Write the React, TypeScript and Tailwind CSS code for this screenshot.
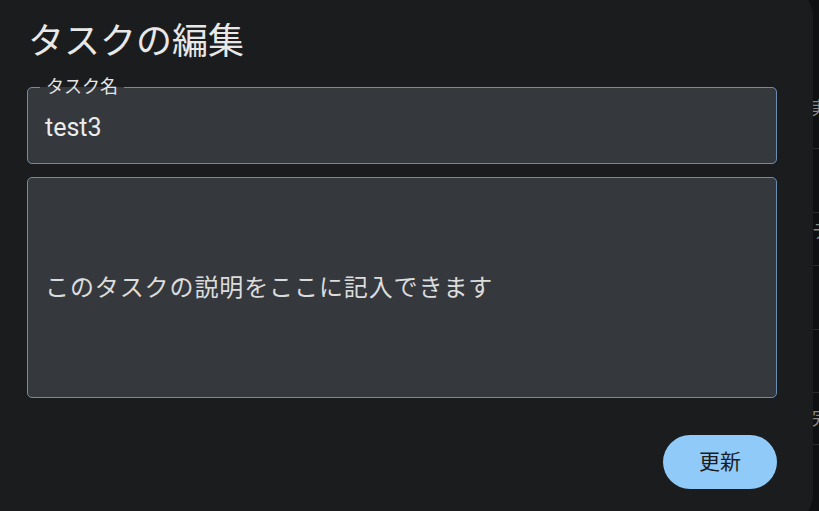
import React from "react";

const font = { fontFamily: 'Roboto, "Noto Sans CJK JP", sans-serif' };

export default function App() {
  return (
    <div
      className="w-[819px] h-[511px] overflow-hidden flex bg-[#0f1011] text-[#e4e4e4]"
      style={font}
    >
      <div className="w-[813px] shrink-0 -mt-[12px] h-[535px] rounded-r-[28px] bg-[#1b1c1e] pt-[12px] pl-[27px] pr-[36px] flex flex-col">
        <h2 className="mt-[21px] ml-[1px] text-[36px] leading-[42px] font-normal text-[#e8e8e8]">
          タスクの編集
        </h2>
        <fieldset className="mt-[15px] h-[86px] border border-[#6b8cad] rounded-[5px] bg-[#35393e] px-[17px] min-w-0">
          <legend className="-ml-[5px] px-[6px] text-[18px] leading-[18px] text-[#e4e4e4]">
            タスク名
          </legend>
          <div className="mt-[17px] text-[25px] leading-[30px] text-[#ececec]">test3</div>
        </fieldset>
        <div className="mt-[13px] h-[221px] border border-[#6b8cad] rounded-[5px] bg-[#35393e] pl-[17px] flex items-center">
          <span className="text-[24px] tracking-[0.9px] leading-[30px] text-[#dcdcdc]">
            このタスクの説明をここに記入できます
          </span>
        </div>
        <div className="mt-[37px] flex justify-end">
          <button className="w-[114px] h-[54px] rounded-full bg-[#90caf9] text-[#1b1c1e] text-[21px] leading-none">
            更新
          </button>
        </div>
      </div>
      <div className="flex-1 flex flex-col overflow-hidden text-[#8a8a8a] text-[18px] leading-none">
        <div className="h-[148px] flex items-end pb-[30px]">
          <span className="-ml-[3px]">実</span>
        </div>
        <div className="h-[64px] border-t border-[#2a2b2c]" />
        <div className="h-[53px] border-t border-[#2a2b2c] flex items-start pt-[10px]">
          <span className="-ml-[1px]">テ</span>
        </div>
        <div className="h-[64px] border-t border-[#2a2b2c]" />
        <div className="h-[63px] border-t border-[#2a2b2c]" />
        <div className="h-[52px] border-t border-[#2a2b2c] flex items-center">
          <span className="-ml-[1px]">完</span>
        </div>
        <div className="flex-1 border-t border-[#2a2b2c]" />
      </div>
    </div>
  );
}
